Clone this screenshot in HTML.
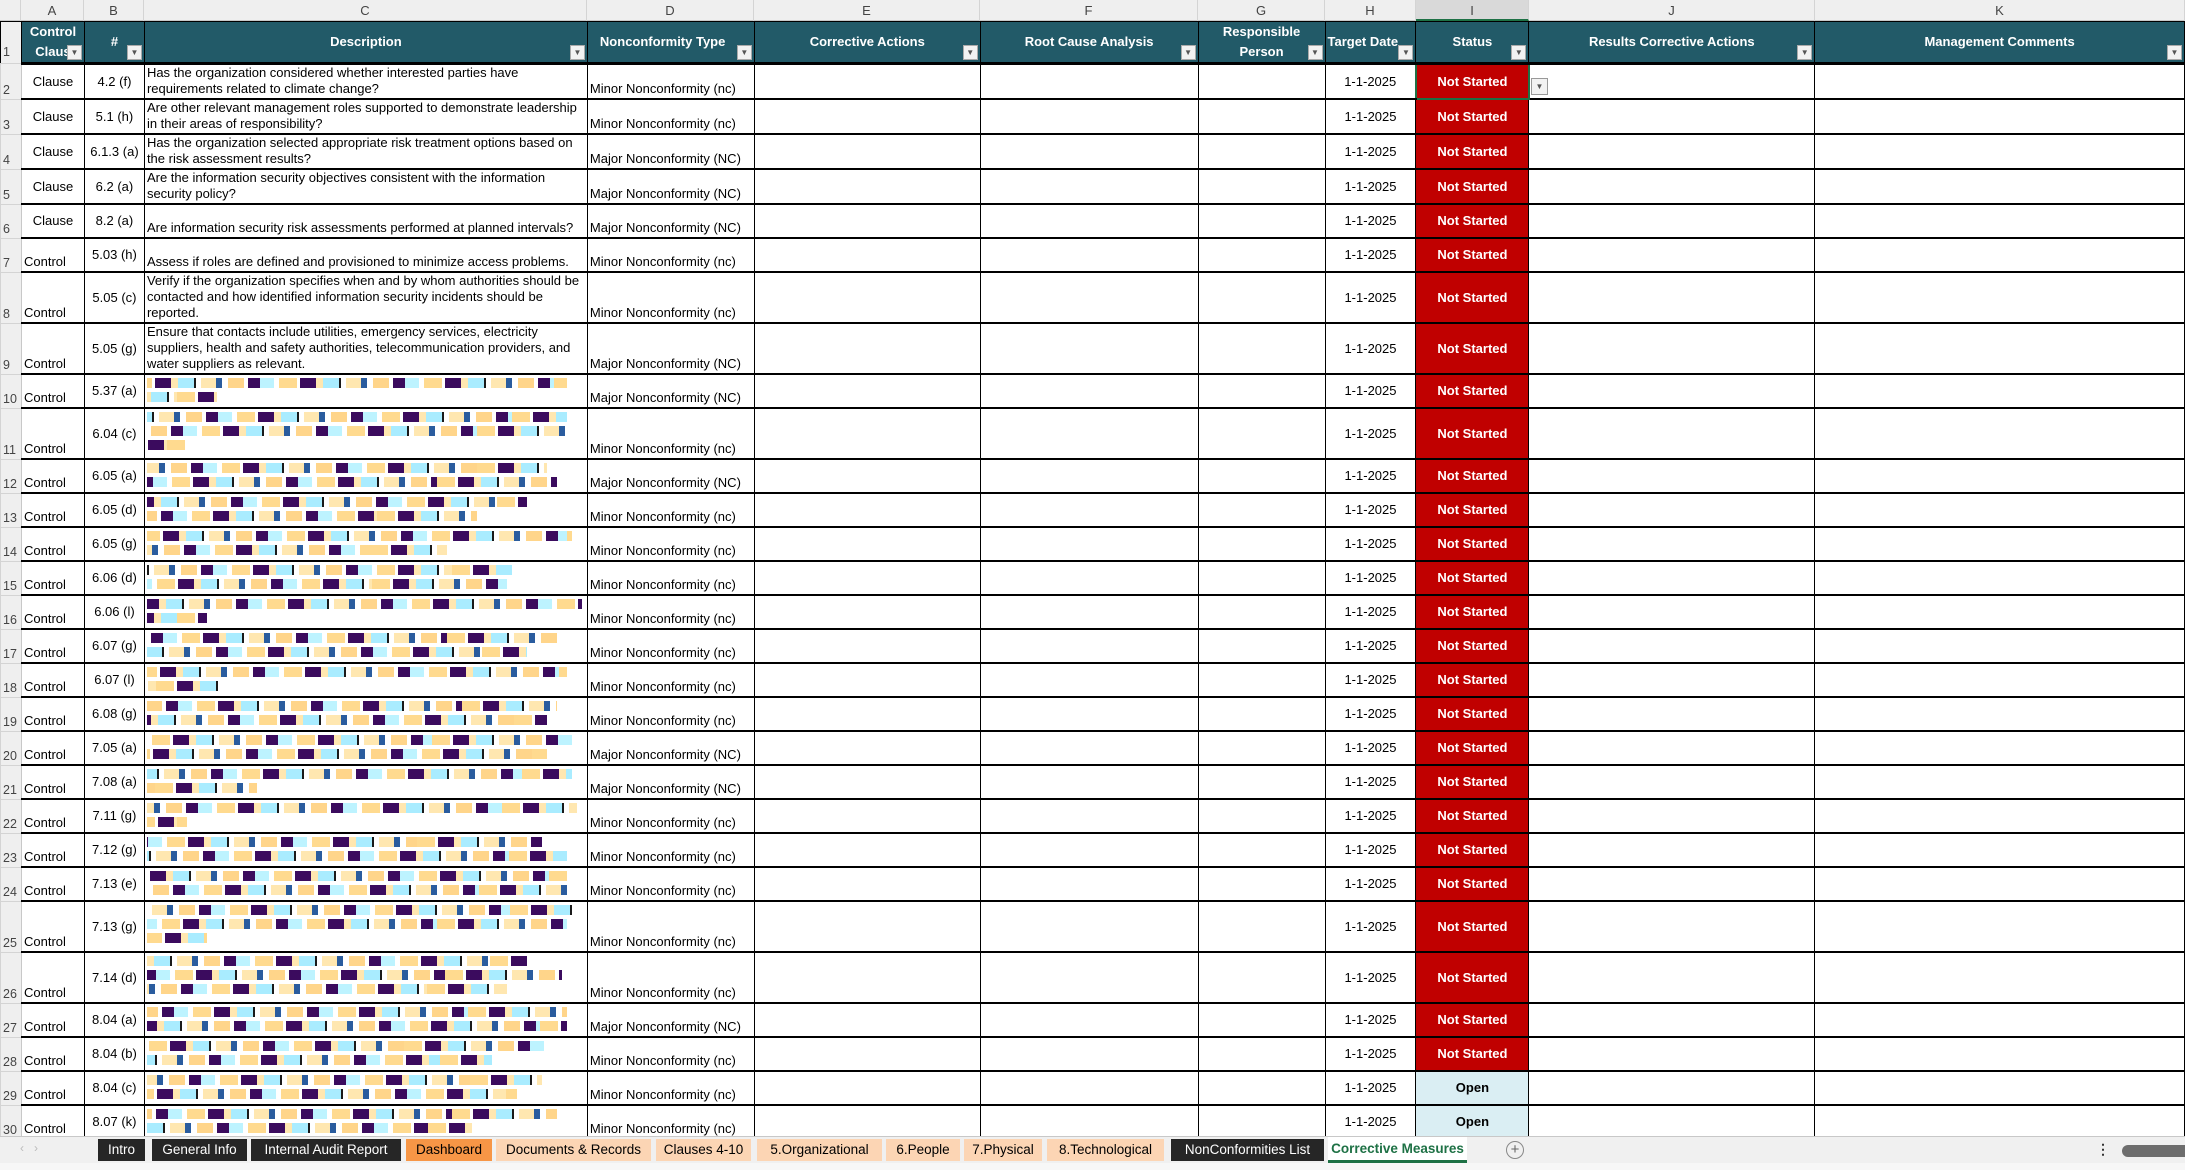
<!DOCTYPE html>
<html><head><meta charset="utf-8">
<style>
*{box-sizing:border-box;margin:0;padding:0}
body{width:2185px;height:1170px;overflow:hidden;background:#fff;font-family:"Liberation Sans",Arial,sans-serif;position:relative}
.colhdr{position:absolute;top:0;left:0;width:2185px;height:21px;background:#efefef;border-bottom:1px solid #c8c8c8}
.colhdr div{position:absolute;top:0;height:21px;line-height:21px;text-align:center;font-size:13px;color:#444;border-right:1px solid #d4d4d4}
table{position:absolute;left:0;top:21px;border-collapse:collapse;table-layout:fixed}
td{border:1px solid #000;border-bottom:2px solid #000;font-size:13px;line-height:16px;overflow:hidden;color:#000;padding:0 2px}
td.rn{background:#efefef;border:1px solid #d4d4d4;border-right:1px solid #c8c8c8;color:#444;font-size:12.5px;vertical-align:bottom;padding:0 0 1px 2px}
tr.h td{background:#225a68;color:#fff;font-weight:bold;text-align:center;border:1px solid #000;border-bottom:3px solid #000;position:relative;line-height:20px}
tr.h td.rn{background:#efefef;color:#444;font-weight:normal;border-bottom:1px solid #d4d4d4;text-align:left}
.fb{position:absolute;right:2px;bottom:2px;width:15px;height:15px;background:#f2f2f2;border:1px solid #aaa;color:#555;font-size:8px;line-height:13px;text-align:center;font-weight:normal}
.a1{text-align:center;vertical-align:middle}
.a2{text-align:left;vertical-align:bottom;padding-bottom:1px}
.b{text-align:center;vertical-align:middle}
.c{vertical-align:bottom;padding-bottom:1px;font-size:13px}
.d{vertical-align:bottom;padding-bottom:1px}
.hh{text-align:center;vertical-align:middle}
.ns{background:#c00000;color:#fff;font-weight:bold;text-align:center;vertical-align:middle}
.op{background:#daeef3;color:#000;font-weight:bold;text-align:center;vertical-align:middle}
.s{height:10px;margin:3px 0 4px 0;background:repeating-linear-gradient(90deg,#ffda8f 0 18px,#fff 18px 21px,#3b0b5e 21px 37px,#ffe7b0 37px 44px,#a9ecff 44px 60px,#1a1a1a 60px 62px,#fff 62px 67px,#ffe7b0 67px 82px,#2a5c9e 82px 88px,#fff 88px 94px,#ffd58a 94px 110px,#fff 110px 114px,#3b0b5e 114px 126px,#bdf3ff 126px 140px,#fff 140px 145px)}
.tabs{position:absolute;left:0;top:1136px;width:2185px;height:27px;background:#f0f0f0;border-top:1px solid #c8c8c8}
.tab{position:absolute;top:2px;height:22px;line-height:22px;font-size:13.5px;text-align:center;color:#fff;background:#262626}
.pe{background:#fcd5b4;color:#000}
.or{background:#f79646;color:#000}
.act{background:#fff;color:#1e7145;font-weight:bold;border-bottom:3px solid #1e7145;top:0;height:26px;line-height:24px}
.sb{position:absolute;left:0;top:1163px;width:2185px;height:7px;background:#f7f7f7}
</style></head><body>
<div class="colhdr">
<div style="left:0;width:21px"></div>
<div style="left:21px;width:63px">A</div>
<div style="left:84px;width:60px">B</div>
<div style="left:144px;width:443px">C</div>
<div style="left:587px;width:167px">D</div>
<div style="left:754px;width:226px">E</div>
<div style="left:980px;width:218px">F</div>
<div style="left:1198px;width:127px">G</div>
<div style="left:1325px;width:91px">H</div>
<div style="left:1416px;width:113px;background:#d9d9d9;border-bottom:2px solid #1e7145">I</div>
<div style="left:1529px;width:286px">J</div>
<div style="left:1815px;width:370px">K</div>
</div>
<table>
<colgroup><col style="width:21px"><col style="width:63px"><col style="width:60px"><col style="width:443px"><col style="width:167px"><col style="width:226px"><col style="width:218px"><col style="width:127px"><col style="width:91px"><col style="width:113px"><col style="width:286px"><col style="width:370px"></colgroup>
<tr class="h" style="height:40px"><td class="rn">1</td><td>Control<br>Claus<span class="fb">▼</span></td><td>#<span class="fb">▼</span></td><td>Description<span class="fb">▼</span></td><td style="text-align:left;padding-left:12px">Nonconformity Type<span class="fb">▼</span></td><td>Corrective Actions<span class="fb">▼</span></td><td>Root Cause Analysis<span class="fb">▼</span></td><td>Responsible<br>Person<span class="fb">▼</span></td><td style="text-align:left">Target Date<span class="fb">▼</span></td><td>Status<span class="fb">▼</span></td><td>Results Corrective Actions<span class="fb">▼</span></td><td>Management Comments<span class="fb">▼</span></td></tr>

<tr style="height:34px"><td class="rn">2</td><td class="a1">Clause</td><td class="b">4.2 (f)</td><td class="c">Has the organization considered whether interested parties have<br>requirements related to climate change?</td><td class="d">Minor Nonconformity (nc)</td><td></td><td></td><td></td><td class="hh">1-1-2025</td><td class="ns" style="border:2px solid #1e7145">Not Started</td><td></td><td></td></tr>
<tr style="height:34px"><td class="rn">3</td><td class="a1">Clause</td><td class="b">5.1 (h)</td><td class="c">Are other relevant management roles supported to demonstrate leadership in their areas of responsibility?</td><td class="d">Minor Nonconformity (nc)</td><td></td><td></td><td></td><td class="hh">1-1-2025</td><td class="ns">Not Started</td><td></td><td></td></tr>
<tr style="height:34px"><td class="rn">4</td><td class="a1">Clause</td><td class="b">6.1.3 (a)</td><td class="c">Has the organization selected appropriate risk treatment options based on the risk assessment results?</td><td class="d">Major Nonconformity (NC)</td><td></td><td></td><td></td><td class="hh">1-1-2025</td><td class="ns">Not Started</td><td></td><td></td></tr>
<tr style="height:34px"><td class="rn">5</td><td class="a1">Clause</td><td class="b">6.2 (a)</td><td class="c">Are the information security objectives consistent with the information<br>security policy?</td><td class="d">Major Nonconformity (NC)</td><td></td><td></td><td></td><td class="hh">1-1-2025</td><td class="ns">Not Started</td><td></td><td></td></tr>
<tr style="height:34px"><td class="rn">6</td><td class="a1">Clause</td><td class="b">8.2 (a)</td><td class="c">Are information security risk assessments performed at planned intervals?</td><td class="d">Major Nonconformity (NC)</td><td></td><td></td><td></td><td class="hh">1-1-2025</td><td class="ns">Not Started</td><td></td><td></td></tr>
<tr style="height:34px"><td class="rn">7</td><td class="a2">Control</td><td class="b">5.03 (h)</td><td class="c">Assess if roles are defined and provisioned to minimize access problems.</td><td class="d">Minor Nonconformity (nc)</td><td></td><td></td><td></td><td class="hh">1-1-2025</td><td class="ns">Not Started</td><td></td><td></td></tr>
<tr style="height:51px"><td class="rn">8</td><td class="a2">Control</td><td class="b">5.05 (c)</td><td class="c">Verify if the organization specifies when and by whom authorities should be contacted and how identified information security incidents should be reported.</td><td class="d">Minor Nonconformity (nc)</td><td></td><td></td><td></td><td class="hh">1-1-2025</td><td class="ns">Not Started</td><td></td><td></td></tr>
<tr style="height:51px"><td class="rn">9</td><td class="a2">Control</td><td class="b">5.05 (g)</td><td class="c">Ensure that contacts include utilities, emergency services, electricity<br>suppliers, health and safety authorities, telecommunication providers, and water suppliers as relevant.</td><td class="d">Major Nonconformity (NC)</td><td></td><td></td><td></td><td class="hh">1-1-2025</td><td class="ns">Not Started</td><td></td><td></td></tr>
<tr style="height:34px"><td class="rn">10</td><td class="a2">Control</td><td class="b">5.37 (a)</td><td class="c" style="vertical-align:top"><div class="s" style="width:420px;background-position:-13px 0"></div><div class="s" style="width:70px;background-position:-40px 0"></div></td><td class="d">Major Nonconformity (NC)</td><td></td><td></td><td></td><td class="hh">1-1-2025</td><td class="ns">Not Started</td><td></td><td></td></tr>
<tr style="height:51px"><td class="rn">11</td><td class="a2">Control</td><td class="b">6.04 (c)</td><td class="c" style="vertical-align:top"><div class="s" style="width:420px;background-position:-55px 0"></div><div class="s" style="width:420px;background-position:-90px 0"></div><div class="s" style="width:40px;background-position:-20px 0"></div></td><td class="d">Minor Nonconformity (nc)</td><td></td><td></td><td></td><td class="hh">1-1-2025</td><td class="ns">Not Started</td><td></td><td></td></tr>
<tr style="height:34px"><td class="rn">12</td><td class="a2">Control</td><td class="b">6.05 (a)</td><td class="c" style="vertical-align:top"><div class="s" style="width:400px;background-position:-70px 0"></div><div class="s" style="width:410px;background-position:-120px 0"></div></td><td class="d">Major Nonconformity (NC)</td><td></td><td></td><td></td><td class="hh">1-1-2025</td><td class="ns">Not Started</td><td></td><td></td></tr>
<tr style="height:34px"><td class="rn">13</td><td class="a2">Control</td><td class="b">6.05 (d)</td><td class="c" style="vertical-align:top"><div class="s" style="width:380px;background-position:-30px 0"></div><div class="s" style="width:330px;background-position:-100px 0"></div></td><td class="d">Minor Nonconformity (nc)</td><td></td><td></td><td></td><td class="hh">1-1-2025</td><td class="ns">Not Started</td><td></td><td></td></tr>
<tr style="height:34px"><td class="rn">14</td><td class="a2">Control</td><td class="b">6.05 (g)</td><td class="c" style="vertical-align:top"><div class="s" style="width:425px;background-position:-5px 0"></div><div class="s" style="width:300px;background-position:-77px 0"></div></td><td class="d">Minor Nonconformity (nc)</td><td></td><td></td><td></td><td class="hh">1-1-2025</td><td class="ns">Not Started</td><td></td><td></td></tr>
<tr style="height:34px"><td class="rn">15</td><td class="a2">Control</td><td class="b">6.06 (d)</td><td class="c" style="vertical-align:top"><div class="s" style="width:365px;background-position:-60px 0"></div><div class="s" style="width:360px;background-position:-135px 0"></div></td><td class="d">Minor Nonconformity (nc)</td><td></td><td></td><td></td><td class="hh">1-1-2025</td><td class="ns">Not Started</td><td></td><td></td></tr>
<tr style="height:34px"><td class="rn">16</td><td class="a2">Control</td><td class="b">6.06 (l)</td><td class="c" style="vertical-align:top"><div class="s" style="width:435px;background-position:-25px 0"></div><div class="s" style="width:60px;background-position:-90px 0"></div></td><td class="d">Minor Nonconformity (nc)</td><td></td><td></td><td></td><td class="hh">1-1-2025</td><td class="ns">Not Started</td><td></td><td></td></tr>
<tr style="height:34px"><td class="rn">17</td><td class="a2">Control</td><td class="b">6.07 (g)</td><td class="c" style="vertical-align:top"><div class="s" style="width:410px;background-position:-110px 0"></div><div class="s" style="width:380px;background-position:-45px 0"></div></td><td class="d">Minor Nonconformity (nc)</td><td></td><td></td><td></td><td class="hh">1-1-2025</td><td class="ns">Not Started</td><td></td><td></td></tr>
<tr style="height:34px"><td class="rn">18</td><td class="a2">Control</td><td class="b">6.07 (l)</td><td class="c" style="vertical-align:top"><div class="s" style="width:420px;background-position:-8px 0"></div><div class="s" style="width:75px;background-position:-66px 0"></div></td><td class="d">Minor Nonconformity (nc)</td><td></td><td></td><td></td><td class="hh">1-1-2025</td><td class="ns">Not Started</td><td></td><td></td></tr>
<tr style="height:34px"><td class="rn">19</td><td class="a2">Control</td><td class="b">6.08 (g)</td><td class="c" style="vertical-align:top"><div class="s" style="width:410px;background-position:-95px 0"></div><div class="s" style="width:400px;background-position:-33px 0"></div></td><td class="d">Minor Nonconformity (nc)</td><td></td><td></td><td></td><td class="hh">1-1-2025</td><td class="ns">Not Started</td><td></td><td></td></tr>
<tr style="height:34px"><td class="rn">20</td><td class="a2">Control</td><td class="b">7.05 (a)</td><td class="c" style="vertical-align:top"><div class="s" style="width:425px;background-position:-140px 0"></div><div class="s" style="width:400px;background-position:-15px 0"></div></td><td class="d">Major Nonconformity (NC)</td><td></td><td></td><td></td><td class="hh">1-1-2025</td><td class="ns">Not Started</td><td></td><td></td></tr>
<tr style="height:34px"><td class="rn">21</td><td class="a2">Control</td><td class="b">7.08 (a)</td><td class="c" style="vertical-align:top"><div class="s" style="width:425px;background-position:-50px 0"></div><div class="s" style="width:110px;background-position:-102px 0"></div></td><td class="d">Major Nonconformity (NC)</td><td></td><td></td><td></td><td class="hh">1-1-2025</td><td class="ns">Not Started</td><td></td><td></td></tr>
<tr style="height:34px"><td class="rn">22</td><td class="a2">Control</td><td class="b">7.11 (g)</td><td class="c" style="vertical-align:top"><div class="s" style="width:430px;background-position:-75px 0"></div><div class="s" style="width:40px;background-position:-10px 0"></div></td><td class="d">Minor Nonconformity (nc)</td><td></td><td></td><td></td><td class="hh">1-1-2025</td><td class="ns">Not Started</td><td></td><td></td></tr>
<tr style="height:34px"><td class="rn">23</td><td class="a2">Control</td><td class="b">7.12 (g)</td><td class="c" style="vertical-align:top"><div class="s" style="width:395px;background-position:-125px 0"></div><div class="s" style="width:420px;background-position:-58px 0"></div></td><td class="d">Minor Nonconformity (nc)</td><td></td><td></td><td></td><td class="hh">1-1-2025</td><td class="ns">Not Started</td><td></td><td></td></tr>
<tr style="height:34px"><td class="rn">24</td><td class="a2">Control</td><td class="b">7.13 (e)</td><td class="c" style="vertical-align:top"><div class="s" style="width:420px;background-position:-18px 0"></div><div class="s" style="width:420px;background-position:-88px 0"></div></td><td class="d">Minor Nonconformity (nc)</td><td></td><td></td><td></td><td class="hh">1-1-2025</td><td class="ns">Not Started</td><td></td><td></td></tr>
<tr style="height:51px"><td class="rn">25</td><td class="a2">Control</td><td class="b">7.13 (g)</td><td class="c" style="vertical-align:top"><div class="s" style="width:425px;background-position:-62px 0"></div><div class="s" style="width:420px;background-position:-130px 0"></div><div class="s" style="width:60px;background-position:-3px 0"></div></td><td class="d">Minor Nonconformity (nc)</td><td></td><td></td><td></td><td class="hh">1-1-2025</td><td class="ns">Not Started</td><td></td><td></td></tr>
<tr style="height:51px"><td class="rn">26</td><td class="a2">Control</td><td class="b">7.14 (d)</td><td class="c" style="vertical-align:top"><div class="s" style="width:380px;background-position:-37px 0"></div><div class="s" style="width:415px;background-position:-117px 0"></div><div class="s" style="width:360px;background-position:-80px 0"></div></td><td class="d">Minor Nonconformity (nc)</td><td></td><td></td><td></td><td class="hh">1-1-2025</td><td class="ns">Not Started</td><td></td><td></td></tr>
<tr style="height:34px"><td class="rn">27</td><td class="a2">Control</td><td class="b">8.04 (a)</td><td class="c" style="vertical-align:top"><div class="s" style="width:420px;background-position:-99px 0"></div><div class="s" style="width:420px;background-position:-27px 0"></div></td><td class="d">Major Nonconformity (NC)</td><td></td><td></td><td></td><td class="hh">1-1-2025</td><td class="ns">Not Started</td><td></td><td></td></tr>
<tr style="height:34px"><td class="rn">28</td><td class="a2">Control</td><td class="b">8.04 (b)</td><td class="c" style="vertical-align:top"><div class="s" style="width:400px;background-position:-143px 0"></div><div class="s" style="width:345px;background-position:-52px 0"></div></td><td class="d">Minor Nonconformity (nc)</td><td></td><td></td><td></td><td class="hh">1-1-2025</td><td class="ns">Not Started</td><td></td><td></td></tr>
<tr style="height:34px"><td class="rn">29</td><td class="a2">Control</td><td class="b">8.04 (c)</td><td class="c" style="vertical-align:top"><div class="s" style="width:395px;background-position:-72px 0"></div><div class="s" style="width:370px;background-position:-11px 0"></div></td><td class="d">Minor Nonconformity (nc)</td><td></td><td></td><td></td><td class="hh">1-1-2025</td><td class="op">Open</td><td></td><td></td></tr>
<tr style="height:34px"><td class="rn">30</td><td class="a2">Control</td><td class="b">8.07 (k)</td><td class="c" style="vertical-align:top"><div class="s" style="width:410px;background-position:-105px 0"></div><div class="s" style="width:325px;background-position:-44px 0"></div></td><td class="d">Minor Nonconformity (nc)</td><td></td><td></td><td></td><td class="hh">1-1-2025</td><td class="op">Open</td><td></td><td></td></tr>
</table>
<div style="position:absolute;left:1531px;top:78px;width:17px;height:17px;background:#f2f2f2;border:1px solid #999;font-size:8px;line-height:15px;text-align:center;color:#555">▼</div>
<div class="tabs">
<div style="position:absolute;left:20px;top:4px;color:#bbb;font-size:12px">‹ &nbsp; ›</div>
<div class="tab" style="left:98px;width:47px">Intro</div>
<div class="tab" style="left:152px;width:95px">General Info</div>
<div class="tab" style="left:251px;width:150px">Internal Audit Report</div>
<div class="tab or" style="left:406px;width:86px">Dashboard</div>
<div class="tab pe" style="left:496px;width:155px">Documents &amp; Records</div>
<div class="tab pe" style="left:656px;width:95px">Clauses 4-10</div>
<div class="tab pe" style="left:757px;width:125px">5.Organizational</div>
<div class="tab pe" style="left:886px;width:74px">6.People</div>
<div class="tab pe" style="left:964px;width:78px">7.Physical</div>
<div class="tab pe" style="left:1047px;width:117px">8.Technological</div>
<div class="tab" style="left:1171px;width:153px">NonConformities List</div>
<div class="tab act" style="left:1328px;width:139px">Corrective Measures</div>
<div style="position:absolute;left:1506px;top:4px;width:18px;height:18px;border:1px solid #888;border-radius:50%;text-align:center;line-height:16px;color:#666;font-size:15px">+</div>
<div style="position:absolute;left:2096px;top:4px;font-size:14px;color:#333;font-weight:bold">⋮</div>
<div style="position:absolute;left:2122px;top:8px;width:63px;height:12px;background:#6d6d6d;border-radius:6px 0 0 6px"></div>
</div>
<div class="sb"></div>
</body></html>
